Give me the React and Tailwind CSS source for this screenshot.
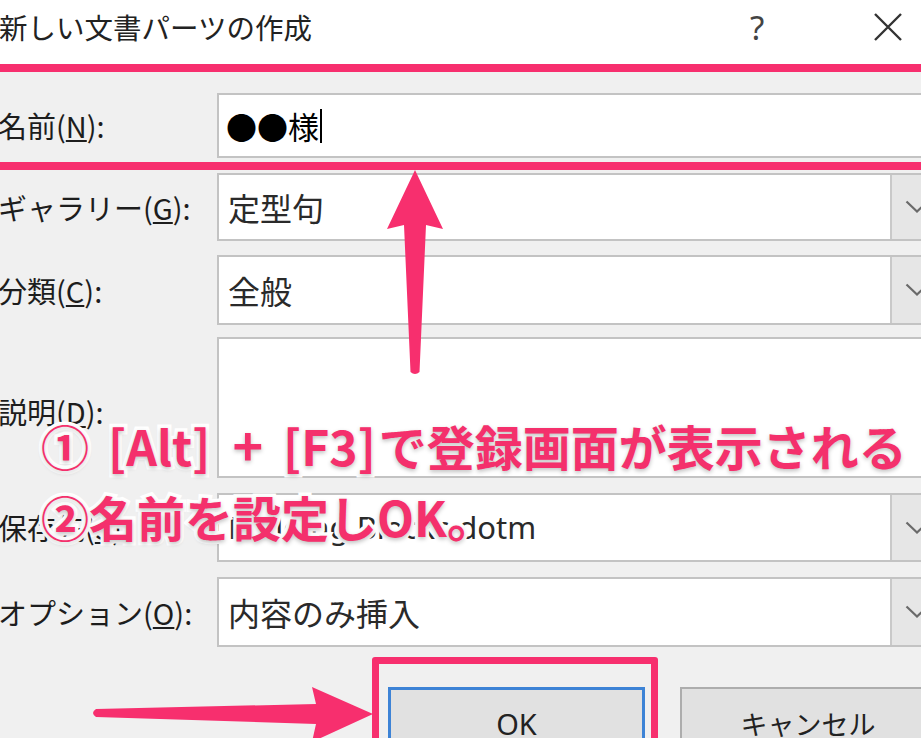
import React from "react";

function Chevron() {
  return (
    <svg width="24" height="14" viewBox="0 0 24 14" className="ml-[13px]">
      <path d="M1.5 1.5 L12 11.5 L22.5 1.5" fill="none" stroke="#6a6a6a" strokeWidth="2.2" />
    </svg>
  );
}

function Dropdown() {
  return (
    <div className="h-full w-[41px] shrink-0 bg-[#e6e6e6] border-l-2 border-[#c9c9c9] flex items-center">
      <Chevron />
    </div>
  );
}

export default function App() {
  const pink = "#f72f6e";
  return (
    <div className="relative w-[921px] h-[738px] overflow-hidden bg-[#f0f0f0] font-['Noto_Sans_CJK_JP','Noto_Sans',sans-serif] text-[#1d1d1d]">
      {/* title bar */}
      <div className="h-[64px] bg-white flex items-center pb-[10px]">
        <div className="w-[751px] shrink-0 -ml-[1px] text-[28.5px] leading-none text-[#222]">新しい文書パーツの作成</div>
        <div className="w-[18px] shrink-0 text-[33px] leading-none text-[#444] font-['Noto_Sans',sans-serif]">?</div>
        <div className="ml-[105px]">
          <svg width="30" height="30" viewBox="0 0 30 30">
            <path d="M2 2 L28 28 M28 2 L2 28" stroke="#333" strokeWidth="2.4" fill="none" />
          </svg>
        </div>
      </div>

      {/* form */}
      <div className="flex flex-col">
        <div className="flex items-center h-[65px] mt-[29px]">
          <div className="w-[219px] -ml-[2px] shrink-0 text-[29px] leading-none">名前(<span className="underline">N</span>):</div>
          <div className="flex-1 h-full -mr-[12px] bg-white border-2 border-[#c3c3c3] flex items-center pl-[7px] text-[31px] leading-none">
            <span className="text-black">●●様</span>
            <span className="ml-[1px] w-[2px] h-[34px] bg-black"></span>
          </div>
        </div>

        <div className="flex items-center h-[68px] mt-[15px]">
          <div className="w-[219px] -ml-[2px] shrink-0 text-[29px] leading-none">ギャラリー(<span className="underline">G</span>):</div>
          <div className="flex-1 h-full -mr-[12px] bg-white border-2 border-[#c3c3c3] flex items-center text-[32px] leading-none">
            <div className="flex-1 pl-[9px] text-[#2a2a2a]">定型句</div>
            <Dropdown />
          </div>
        </div>

        <div className="flex items-center h-[70px] mt-[14px]">
          <div className="w-[219px] -ml-[2px] shrink-0 text-[29px] leading-none">分類(<span className="underline">C</span>):</div>
          <div className="flex-1 h-full -mr-[12px] bg-white border-2 border-[#c3c3c3] flex items-center text-[32px] leading-none">
            <div className="flex-1 pl-[9px] text-[#2a2a2a]">全般</div>
            <Dropdown />
          </div>
        </div>

        <div className="flex items-center h-[141px] mt-[12px]">
          <div className="w-[219px] -ml-[2px] shrink-0 text-[29px] leading-none pt-[8px]">説明(<span className="underline">D</span>):</div>
          <div className="flex-1 h-full -mr-[12px] bg-white border-2 border-[#c3c3c3]"></div>
        </div>

        <div className="flex items-center h-[69px] mt-[15px]">
          <div className="w-[219px] -ml-[2px] shrink-0 text-[29px] leading-none">保存先(<span className="underline">S</span>):</div>
          <div className="flex-1 h-full -mr-[12px] bg-white border-2 border-[#c3c3c3] flex items-center text-[31px] leading-none">
            <div className="flex-1 pl-[9px] text-[#2a2a2a] font-['Noto_Sans',sans-serif]">Building Blocks.dotm</div>
            <Dropdown />
          </div>
        </div>

        <div className="flex items-center h-[70px] mt-[15px]">
          <div className="w-[219px] -ml-[2px] shrink-0 text-[29px] leading-none">オプション(<span className="underline">O</span>):</div>
          <div className="flex-1 h-full -mr-[12px] bg-white border-2 border-[#c3c3c3] flex items-center text-[32px] leading-none">
            <div className="flex-1 pl-[9px] text-[#2a2a2a]">内容のみ挿入</div>
            <Dropdown />
          </div>
        </div>

        {/* buttons */}
        <div className="flex mt-[40px] ml-[388px] gap-[35px]">
          <div className="w-[257px] h-[90px] shrink-0 border-[3px] border-[#3d83d6] bg-[#e1e1e1] flex justify-center pt-[14px] text-[29px] leading-[40px] text-[#222] font-['Noto_Sans',sans-serif]">OK</div>
          <div className="w-[256px] h-[90px] shrink-0 border-2 border-[#adadad] bg-[#e1e1e1] flex justify-center pt-[15px] text-[27px] leading-[40px] text-[#222]">キャンセル</div>
        </div>
      </div>

      {/* annotations */}
      <div className="absolute -left-[10px] -right-[10px] top-[64px] h-[106px] border-y-[8px] border-[#f72f6e]"></div>
      <div className="absolute left-[372px] top-[657px] w-[286px] h-[110px] border-[7px] border-[#f72f6e] rounded-[3px]"></div>

      <svg className="absolute left-0 top-0" width="921" height="738" viewBox="0 0 921 738">
        <path d="M415 170 L443 229 L426 225 L419.5 372 Q415 376 410.5 372 L404 225 L387 229 Z" fill={pink} />
        <path d="M373 714 L312 687 L316 704 L96 709 Q90 713 96 717 L316 724 L312 742 Z" fill={pink} />
      </svg>

      <div className="absolute left-[41px] top-[407px] text-[48px] leading-[73px] font-bold text-[#f4306c] whitespace-nowrap [paint-order:stroke_fill] [-webkit-text-stroke:7px_white] [text-shadow:0_2px_4px_rgba(0,0,0,0.25)]">
        <div className="flex items-baseline">
          <span>①</span>
          <span className="ml-[19px]">[Alt]</span>
          <span className="ml-[22px] text-[52px]">+</span>
          <span className="ml-[20px]">[F3]</span>
          <span className="ml-[3px]">で登録画面が表示される</span>
        </div>
        <div className="-mt-[2px]">②名前を設定しOK。</div>
      </div>
    </div>
  );
}
